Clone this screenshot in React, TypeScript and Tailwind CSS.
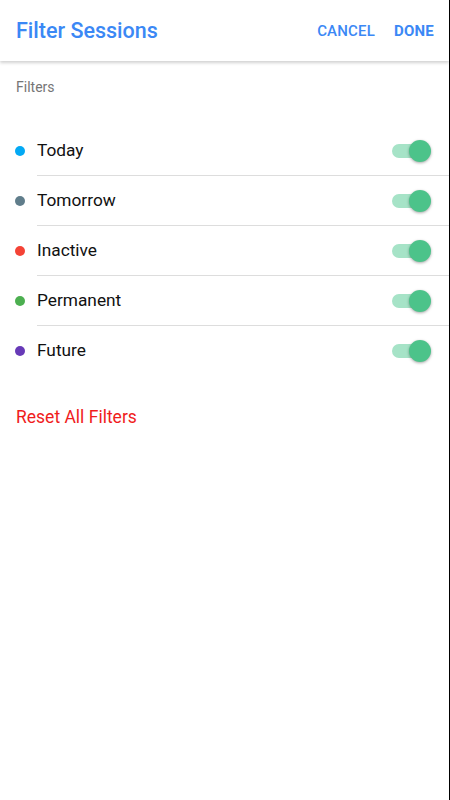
import { useState } from "react";

type FilterItem = {
  label: string;
  color: string;
};

const filters: FilterItem[] = [
  { label: "Today", color: "#03a9f4" },
  { label: "Tomorrow", color: "#607d8b" },
  { label: "Inactive", color: "#f44336" },
  { label: "Permanent", color: "#4caf50" },
  { label: "Future", color: "#673ab7" },
];

function Toggle({ on, onChange }: { on: boolean; onChange: () => void }) {
  return (
    <button
      onClick={onChange}
      className="relative h-[22px] w-[40px] shrink-0"
      aria-pressed={on}
    >
      <span
        className={`absolute left-[1px] top-[4px] h-[14px] w-[33px] rounded-full ${
          on ? "bg-[#a6e3c7]" : "bg-[#bdbdbd]"
        }`}
      />
      <span
        className={`absolute top-0 h-[22px] w-[22px] rounded-full shadow-[0_1px_3px_rgba(0,0,0,0.35)] ${
          on ? "left-[18px] bg-[#4cc38a]" : "left-0 bg-[#f5f5f5]"
        }`}
      />
    </button>
  );
}

export default function App() {
  const [enabled, setEnabled] = useState<boolean[]>(filters.map(() => true));

  const toggle = (i: number) =>
    setEnabled((cur) => cur.map((v, j) => (j === i ? !v : v)));

  return (
    <div className="flex h-[800px] w-[450px] bg-white font-['Roboto',sans-serif]">
      <div className="flex w-[449px] flex-col">
        {/* Header */}
        <div className="relative z-10 flex h-[61px] items-center justify-between bg-white pl-4 pr-[15px] pt-[1px] shadow-[0_2px_3px_rgba(0,0,0,0.18)]">
          <h1 className="text-[21.5px] font-medium text-[#3b88f5]">Filter Sessions</h1>
          <div className="flex items-center gap-[19px] text-[15px] font-medium tracking-[0.2px] text-[#3b88f5]">
            <button>CANCEL</button>
            <button className="font-bold">DONE</button>
          </div>
        </div>

        <div className="pl-4 pt-[16px] text-[14px] text-[#757575]">Filters</div>

        {/* Filter rows */}
        <div className="mt-[28px]">
          {filters.map((f, i) => (
            <div key={f.label} className="flex h-[50px] items-center pl-[15px]">
              <span
                className="mr-[12px] h-[10px] w-[10px] shrink-0 rounded-full"
                style={{ backgroundColor: f.color }}
              />
              <div
                className={`flex h-full flex-1 items-center justify-between pr-[18px] ${
                  i < filters.length - 1 ? "border-b border-[#dddddd]" : ""
                }`}
              >
                <span className="text-[17.3px] text-[#111]">{f.label}</span>
                <Toggle on={enabled[i]} onChange={() => toggle(i)} />
              </div>
            </div>
          ))}
        </div>

        <button className="mt-[28px] self-start pl-4 text-[17.5px] text-[#f01c1c]">
          Reset All Filters
        </button>
      </div>
      <div className="w-[1px] bg-black" />
    </div>
  );
}
